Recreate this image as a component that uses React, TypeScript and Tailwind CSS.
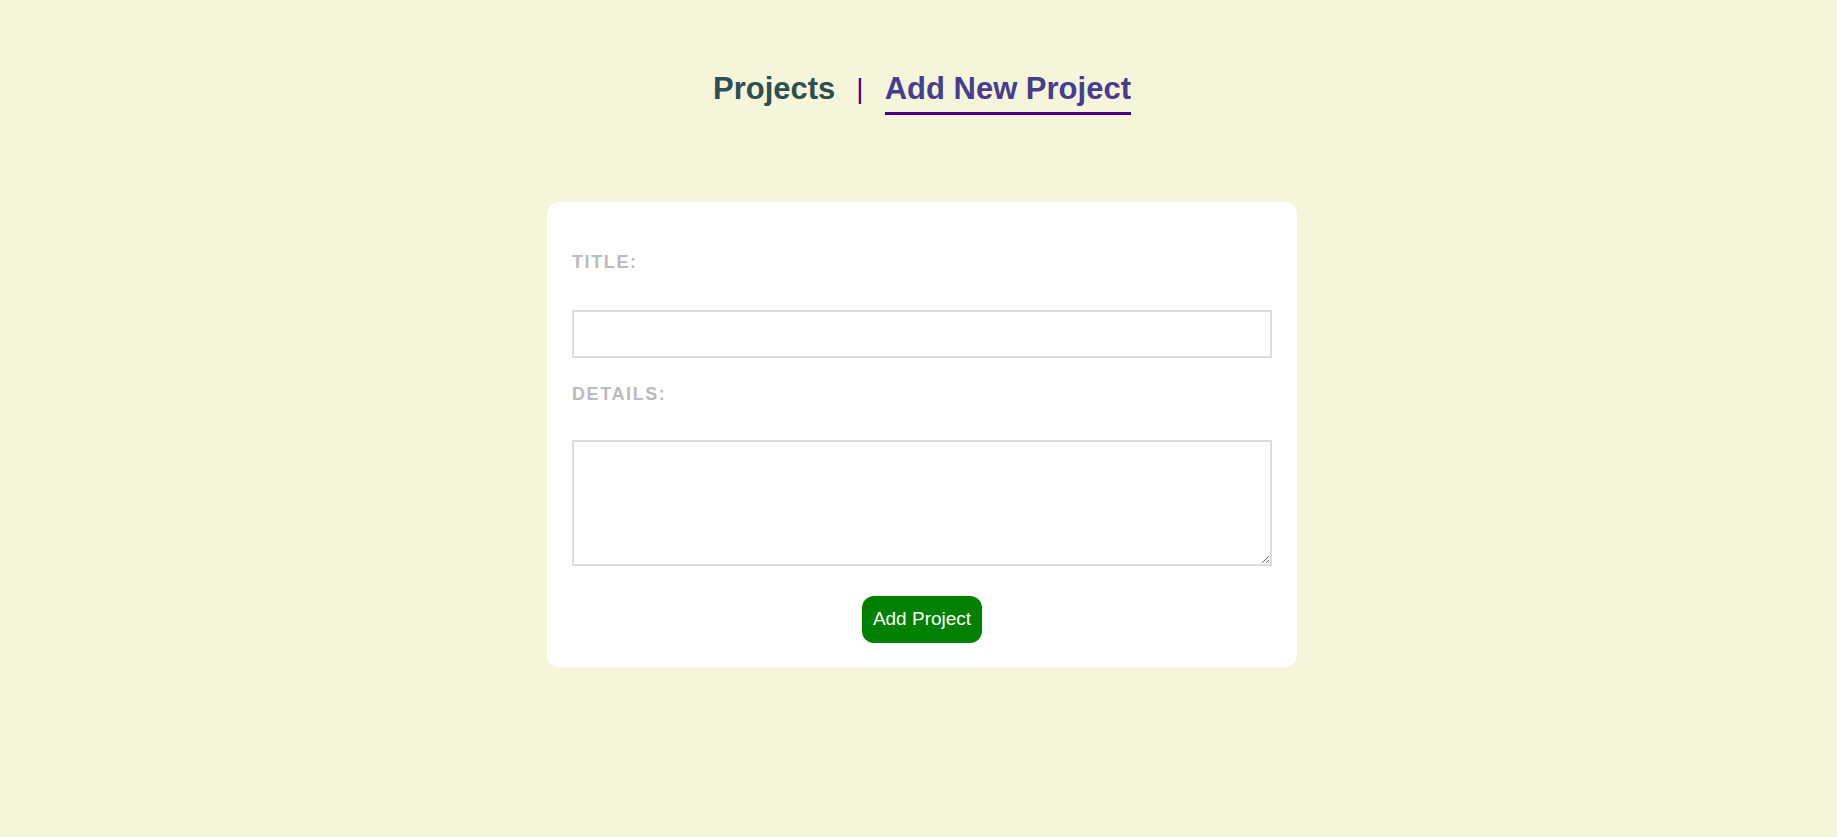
export default function App() {
  return (
    <div className="min-h-screen w-full bg-[#f5f5dc] font-['Liberation_Sans',Arial,sans-serif] pl-[7px]">
      <nav className="flex items-start justify-center pt-[71px]">
        <a className="text-[31px] font-bold leading-[36px] text-[#2f4f4f]">Projects</a>
        <span className="mx-[21px] text-[28px] leading-[36px] text-[#4b0082]">|</span>
        <a className="text-[31px] font-bold leading-[36px] text-[#483d8b] pb-[5px] border-b-[3px] border-[#4b0082]">
          Add New Project
        </a>
      </nav>

      <div className="mx-auto mt-[87px] w-[750px] rounded-[12px] bg-white px-[25px] pt-[25px] pb-[24px]">
        <form className="flex flex-col">
          <label className="mt-[25px] block text-[18px] leading-[20px] font-bold uppercase tracking-[1.6px] text-[#bbbbbb]">
            Title:
          </label>
          <input
            type="text"
            className="mt-[38px] h-[48px] w-full border-2 border-[#dddddd] bg-white px-2 outline-none"
          />
          <label className="mt-[26px] block text-[18px] leading-[20px] font-bold uppercase tracking-[1.6px] text-[#bbbbbb]">
            Details:
          </label>
          <textarea className="mt-[36px] h-[126px] w-full border-2 border-[#dddddd] bg-white px-2 outline-none" />
          <div className="mt-[30px] flex justify-center">
            <button
              type="button"
              className="h-[47px] rounded-[12px] bg-[#008000] px-[11px] text-[19px] text-white"
            >
              Add Project
            </button>
          </div>
        </form>
      </div>
    </div>
  );
}
